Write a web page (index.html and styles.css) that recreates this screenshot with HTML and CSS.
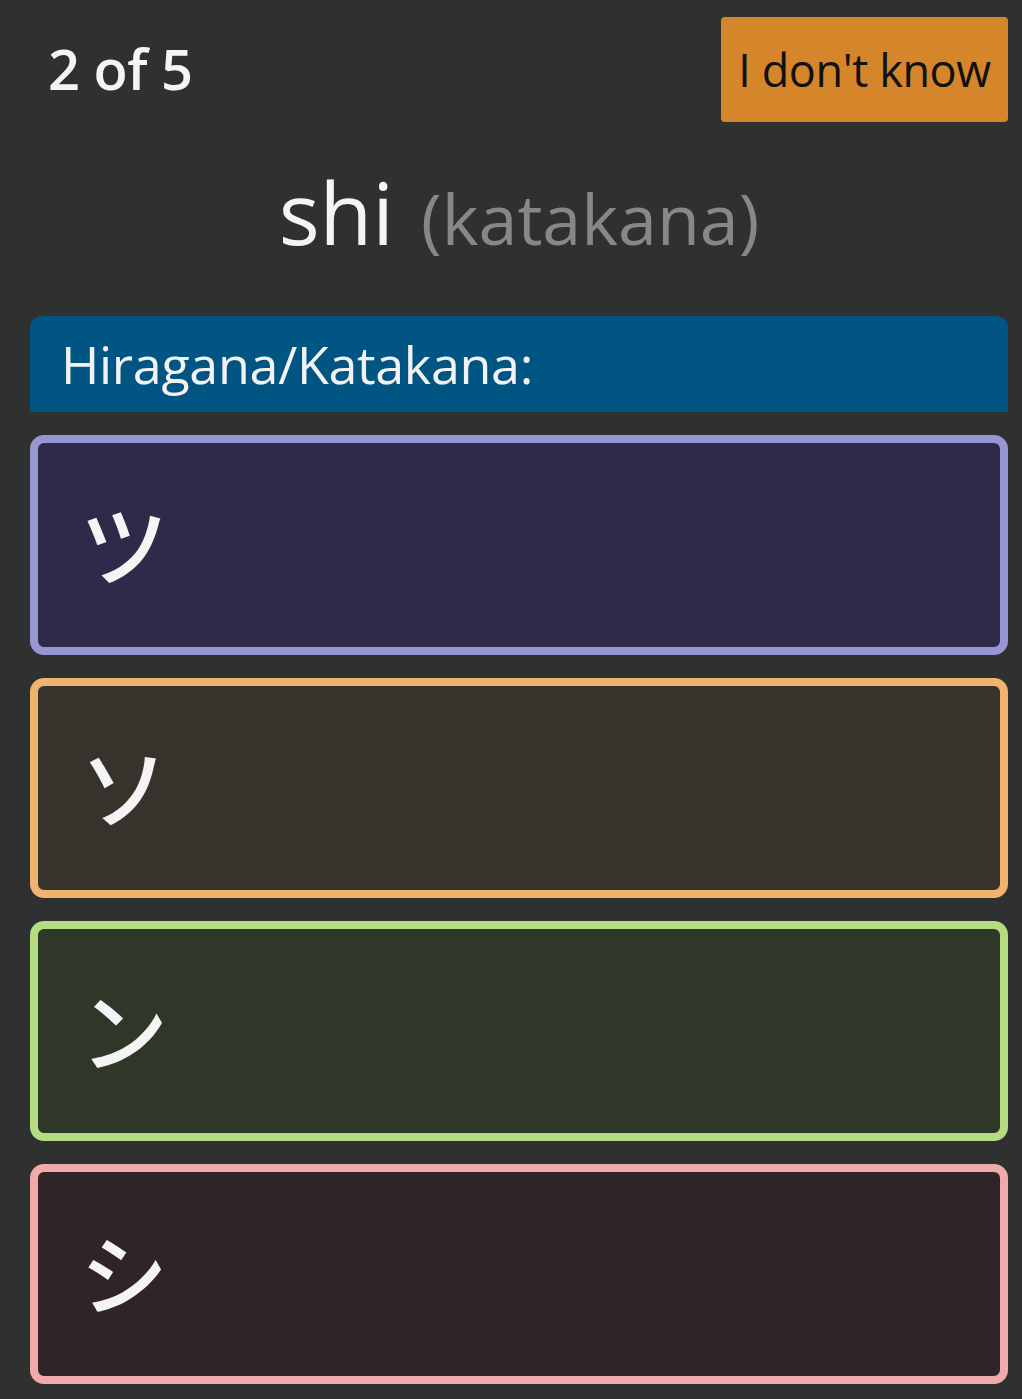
FILE: index.html
```html
<!DOCTYPE html>
<html lang="en">
<head>
<meta charset="utf-8">
<link rel="stylesheet" href="styles.css">
</head>
<body>
<div class="page">
  <header class="top">
    <div class="counter">2 of 5</div>
    <button class="skip">I don't know</button>
  </header>
  <h1 class="prompt"><span class="romaji">shi</span><span class="kind">(katakana)</span></h1>
  <div class="section-head">Hiragana/Katakana:</div>
  <div class="choices">
    <div class="choice c-purple"><span class="kana" lang="ja">ツ</span></div>
    <div class="choice c-orange"><span class="kana" lang="ja">ソ</span></div>
    <div class="choice c-green"><span class="kana" lang="ja">ン</span></div>
    <div class="choice c-pink"><span class="kana" lang="ja">シ</span></div>
  </div>
</div>
</body>
</html>
```
FILE: styles.css
```css
html, body {
  margin: 0;
  padding: 0;
  background: #2f3030;
}
body {
  font-family: "Open Sans", "Noto Sans", sans-serif;
  color: #f4f4f4;
}
.page {
  padding: 17px 14px 0 30px;
}
.top {
  display: flex;
  justify-content: space-between;
  align-items: flex-start;
  padding-left: 18px;
}
.counter {
  font-size: 56px;
  font-weight: 600;
  line-height: 1;
  margin-top: 23px;
  letter-spacing: -0.5px;
}
.skip {
  width: 287px;
  height: 105px;
  background: #d5852a;
  border: none;
  border-radius: 4px;
  font-family: inherit;
  font-size: 45px;
  letter-spacing: -0.4px;
  color: #111;
  padding: 0;
}
.prompt {
  margin: 47px 0 0;
  text-align: center;
  font-weight: 400;
  line-height: 1;
  height: 147px;
}
.romaji {
  font-size: 86px;
  color: #f4f4f4;
}
.kind {
  font-size: 70px;
  color: #878787;
  margin-left: 27px;
}
.section-head {
  height: 96px;
  background: #005583;
  border-radius: 12px 12px 0 0;
  font-size: 52px;
  letter-spacing: -0.3px;
  line-height: 96px;
  padding-left: 31px;
  color: #f2f2f2;
}
.choices {
  margin-top: 23px;
  display: flex;
  flex-direction: column;
  gap: 23px;
}
.choice {
  height: 204px;
  border: 8px solid;
  border-radius: 14px;
  display: flex;
  align-items: center;
  padding-left: 42px;
}
.kana {
  font-family: "Noto Sans CJK JP", sans-serif;
  font-size: 88px;
  font-weight: 500;
  color: #f4f4f4;
  line-height: 1;
  margin-top: -8px;
}
.c-purple { border-color: #9696d2; background: #2d2a4a; }
.c-orange { border-color: #f0b46e; background: #37322c; }
.c-green  { border-color: #b4dc82; background: #2f3828; }
.c-pink   { border-color: #f0aaaa; background: #302428; }
```
